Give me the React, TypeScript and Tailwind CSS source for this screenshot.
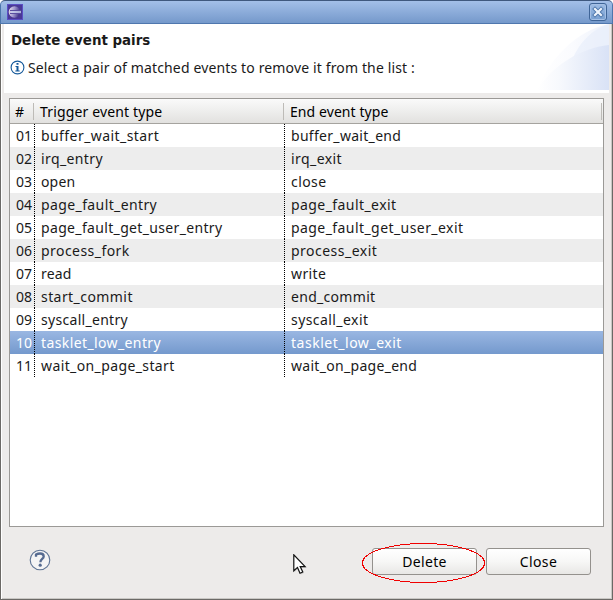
type Cell = { text: string; spacing: string };

const cell = (text: string, spacing = 'tracking-[0.39px]'): Cell => ({ text, spacing });

const rows: [Cell, Cell][] = [
  [cell('buffer_wait_start', 'tracking-[0.43px]'), cell('buffer_wait_end', 'tracking-[0.3px]')],
  [cell('irq_entry'), cell('irq_exit', 'tracking-[0.43px]')],
  [cell('open', 'tracking-[0.15px]'), cell('close', 'tracking-[0.43px]')],
  [cell('page_fault_entry'), cell('page_fault_exit', 'tracking-[0.43px]')],
  [cell('page_fault_get_user_entry', 'tracking-[0.34px]'), cell('page_fault_get_user_exit', 'tracking-[0.43px]')],
  [cell('process_fork', 'tracking-[0.45px]'), cell('process_exit', 'tracking-[0.48px]')],
  [cell('read', 'tracking-[0.15px]'), cell('write')],
  [cell('start_commit', 'tracking-[0.43px]'), cell('end_commit', 'tracking-[0.3px]')],
  [cell('syscall_entry', 'tracking-[0.3px]'), cell('syscall_exit', 'tracking-[0.43px]')],
  [cell('tasklet_low_entry'), cell('tasklet_low_exit', 'tracking-[0.52px]')],
  [cell('wait_on_page_start'), cell('wait_on_page_end', 'tracking-[0.3px]')],
];

const selected = 9;

function TitleBar() {
  return (
    <header className="flex h-6 shrink-0 items-center justify-between rounded-t-[5px] border-x border-t border-b border-t-[#3f587e] border-x-[#4d76ad] border-b-[#4f77ae] bg-linear-to-b from-[#a3bfe8] to-[#7599cb] pl-1.5 pr-[5px]">
      <svg width="16" height="16" viewBox="0 0 16 16">
        <defs>
          <linearGradient id="orb" x1="0" y1="0" x2="1" y2="0.2">
            <stop offset="0" stopColor="#f0e6ee" />
            <stop offset="0.5" stopColor="#a39bd0" />
            <stop offset="1" stopColor="#43368c" />
          </linearGradient>
        </defs>
        <rect width="16" height="16" fill="#5a4ec4" />
        <rect x="1" y="1" width="14" height="14" fill="#4a3896" />
        <circle cx="7.5" cy="8" r="5.8" fill="url(#orb)" />
        <path d="M3 6.5h11M3 9.5h11" stroke="#5a4ea0" strokeWidth="1" />
        <path d="M4 7.5h10M4 8.5h10" stroke="#c8d0ee" strokeWidth=".8" />
      </svg>
      <button aria-label="Close window" className="flex h-[18px] w-[18px] items-center justify-center rounded-[3px] border border-[#3f6598] bg-linear-to-b from-[#9dbce5] to-[#789fd0] shadow-[inset_0_0_0_1px_#a5c0e5]">
        <svg width="12" height="12" viewBox="0 0 12 12">
          <path d="M3 3l6 6M9 3l-6 6" stroke="#4d75aa" strokeWidth="4" strokeLinecap="square" />
          <path d="M3 3l6 6M9 3l-6 6" stroke="#eef4fc" strokeWidth="2.2" strokeLinecap="square" />
        </svg>
      </button>
    </header>
  );
}

function Banner() {
  return (
    <section className="flex h-[69px] shrink-0 justify-between bg-white">
      <div className="pl-[7px] pt-2">
        <h1 className="whitespace-nowrap font-['DejaVu_Sans',sans-serif] text-[13.4px] leading-[18px] font-bold text-[#1a1a1a]">Delete event pairs</h1>
        <div className="mt-2 flex h-5 items-center">
          <svg width="15" height="15" viewBox="0 0 15 15" className="-ml-[1.5px] -mt-[2px] shrink-0">
            <circle cx="7.5" cy="7.5" r="6.4" fill="#fff" stroke="#15599a" strokeWidth="1.1" />
            <path d="M6.5 3h2v1.8h-2zM5.5 6h3v4.4h1.2v1.1H5.3v-1.1h1.2V7h-1z" fill="#15599a" />
          </svg>
          <p className="ml-[3.5px] whitespace-nowrap text-[14px] leading-5 tracking-[0.14px]">Select a pair of matched events to remove it from the list :</p>
        </div>
      </div>
      <svg width="72" height="66" viewBox="0 0 72 66">
        <defs>
          <linearGradient id="outer" x1="0" y1="0" x2="1" y2="0">
            <stop offset="0" stopColor="#fff" />
            <stop offset="0.5" stopColor="#fafbfe" />
            <stop offset="1" stopColor="#eff3fc" />
          </linearGradient>
          <linearGradient id="inner" x1="0" y1="0" x2="1" y2="0">
            <stop offset="0" stopColor="#fff" />
            <stop offset="0.3" stopColor="#f7f9fd" />
            <stop offset="1" stopColor="#d9e2f6" />
          </linearGradient>
        </defs>
        <path d="M0 66C12 36 38 7 72 0v66z" fill="url(#outer)" />
        <path d="M35 36C43 17 56 5 72 0v40z" fill="#e6edfa" opacity=".6" />
        <path d="M0 66C15 42 43 24 72 21v45z" fill="url(#inner)" />
      </svg>
    </section>
  );
}

function EventTable() {
  return (
    <div className="mx-[5px] mt-[5px] h-[429px] shrink-0 border border-[#9b9996] bg-white">
      <div className="flex h-[25px] items-center border-b border-[#a5a39f] bg-linear-to-b from-[#fafafa] via-[#eeeeed] to-[#e2e1df] leading-[23px] text-black">
        <span className="flex h-[17px] w-6 items-center border-r border-[#bdbbb7] pl-[5px]">#</span>
        <span className="flex h-[17px] w-[250px] items-center border-r border-[#bdbbb7] pl-1.5 tracking-[0.15px]">Trigger event type</span>
        <span className="mr-px flex h-[17px] flex-1 items-center border-r border-[#bdbbb7] pl-1.5 tracking-[0.08px]">End event type</span>
      </div>
      {rows.map(([start, end], i) => (
        <div
          key={start.text}
          className={`flex h-[23px] leading-[23px] ${i === selected ? 'bg-linear-to-b from-[#9ab7e2] to-[#7499cd] text-white' : i % 2 ? 'bg-[#ededed]' : 'bg-white'}`}
        >
          <span className="w-6 pl-1.5">{String(i + 1).padStart(2, '0')}</span>
          <Divider />
          <span className={`w-[249px] pl-1.5 ${start.spacing}`}>{start.text}</span>
          <Divider />
          <span className={`pl-1.5 ${end.spacing}`}>{end.text}</span>
        </div>
      ))}
    </div>
  );
}

function Divider() {
  return <i className="w-px bg-[repeating-linear-gradient(to_bottom,#000_0_1px,transparent_1px_2px)]" />;
}

function DialogButton({ label }: { label: string }) {
  return (
    <button className="flex h-[27px] w-[105px] items-center justify-center rounded-[3px] border border-[#94918d] bg-linear-to-b from-white via-[#f7f7f6] to-[#e8e7e5] text-[14px] leading-[25px] tracking-[0.35px] text-black">
      {label}
    </button>
  );
}

function Footer() {
  return (
    <footer className="flex flex-1 items-start pl-[25px] pr-[18px] pt-[21px]">
      <svg width="22" height="22" viewBox="0 0 22 22" className="mt-px">
        <circle cx="11" cy="11" r="9.8" fill="#f4f4f5" stroke="#5c7294" strokeWidth="1.1" />
        <path d="M7 7.8V5.6Q9 4.5 11.1 4.5C13.7 4.5 14.7 5.7 14.7 7.4C14.7 10 11.4 10 11.4 13.2" fill="none" stroke="#566b91" strokeWidth="2.3" />
        <circle cx="11.2" cy="16.2" r="1.6" fill="#566b91" />
      </svg>
      <svg width="15" height="23" viewBox="0 0 15 23" className="ml-[242px] mt-1.5">
        <path d="M1.5 1v17l3.7-3.5 2.6 6 2.7-1.2-2.6-5.6H13z" fill="#aaa" opacity=".5" />
        <path d="M.8.8v16l3.7-3.4 2.5 5.8 2.8-1.2-2.6-5.4h4.9z" fill="#fff" stroke="#111" strokeWidth="1.2" />
      </svg>
      <div className="ml-auto flex gap-[9px]">
        <div className="relative">
          <DialogButton label="Delete" />
          <svg width="123" height="40" viewBox="0 0 123 40" className="pointer-events-none absolute -left-2.5 -top-[5px] max-w-none" shapeRendering="crispEdges">
            <ellipse cx="61.5" cy="20" rx="61" ry="19.5" fill="none" stroke="#f00000" />
          </svg>
        </div>
        <DialogButton label="Close" />
      </div>
    </footer>
  );
}

export default function App() {
  return (
    <div className="flex h-[600px] w-[613px] flex-col bg-white font-['Noto_Sans',sans-serif] text-[14px] text-[#1a1a1a]">
      <TitleBar />
      <main className="flex flex-1 flex-col border-x border-b border-[#6b6966] bg-[#edebea] pl-[3px] pr-[3px] shadow-[inset_1px_0_#fff,inset_-1px_-1px_#c9c7c4]">
        <Banner />
        <EventTable />
        <Footer />
      </main>
    </div>
  );
}
